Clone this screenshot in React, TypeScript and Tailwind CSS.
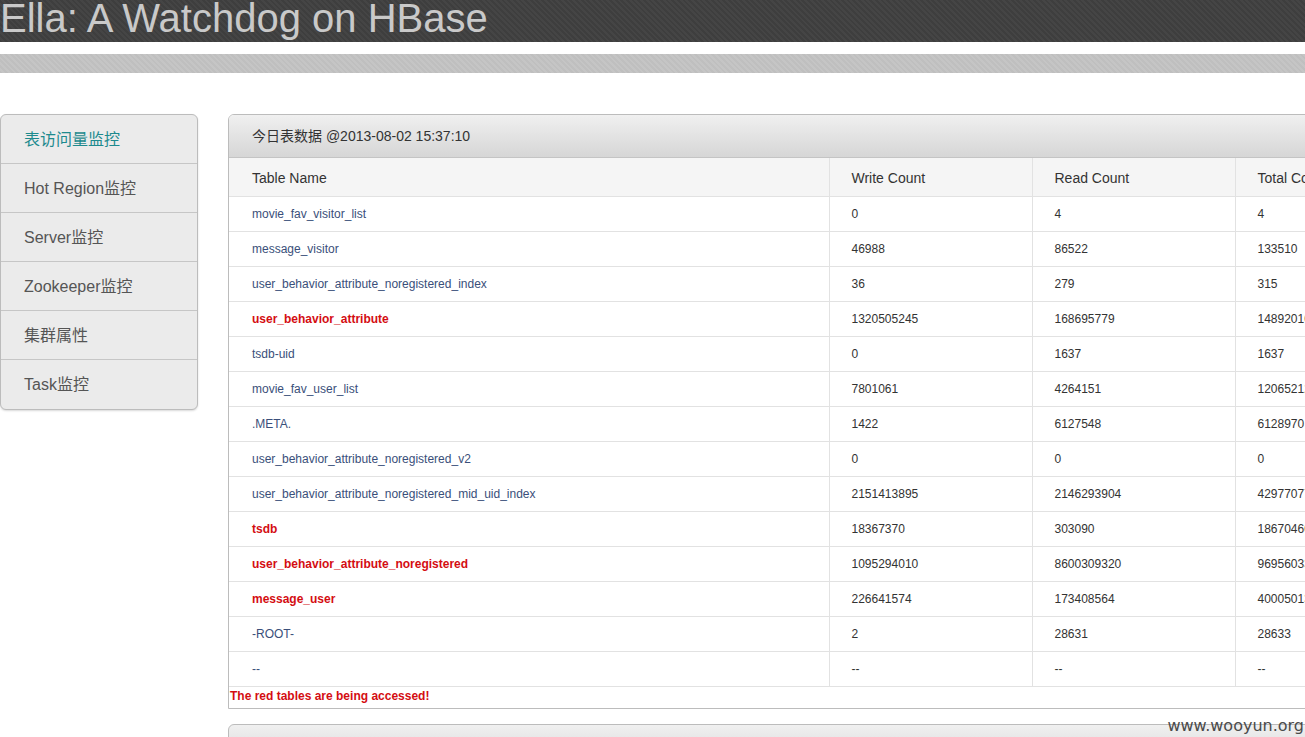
const rows: { name: string; w: string; r: string; t: string; hot?: boolean }[] = [
  { name: 'movie_fav_visitor_list', w: '0', r: '4', t: '4' },
  { name: 'message_visitor', w: '46988', r: '86522', t: '133510' },
  { name: 'user_behavior_attribute_noregistered_index', w: '36', r: '279', t: '315' },
  { name: 'user_behavior_attribute', w: '1320505245', r: '168695779', t: '1489201024', hot: true },
  { name: 'tsdb-uid', w: '0', r: '1637', t: '1637' },
  { name: 'movie_fav_user_list', w: '7801061', r: '4264151', t: '12065212' },
  { name: '.META.', w: '1422', r: '6127548', t: '6128970' },
  { name: 'user_behavior_attribute_noregistered_v2', w: '0', r: '0', t: '0' },
  { name: 'user_behavior_attribute_noregistered_mid_uid_index', w: '2151413895', r: '2146293904', t: '4297707799' },
  { name: 'tsdb', w: '18367370', r: '303090', t: '18670460', hot: true },
  { name: 'user_behavior_attribute_noregistered', w: '1095294010', r: '8600309320', t: '9695603330', hot: true },
  { name: 'message_user', w: '226641574', r: '173408564', t: '400050138', hot: true },
  { name: '-ROOT-', w: '2', r: '28631', t: '28633' },
  { name: '--', w: '--', r: '--', t: '--' },
];

const menu = ['表访问量监控', 'Hot Region监控', 'Server监控', 'Zookeeper监控', '集群属性', 'Task监控'];

export default function App() {
  return (
    <div className="relative w-[1305px] h-[737px] overflow-hidden bg-white font-['Liberation_Sans','Noto_Sans_CJK_SC',sans-serif]">
      {/* title bar */}
      <div className="h-[42px] bg-[repeating-linear-gradient(45deg,#3e3e3e_0px,#3e3e3e_2px,#454545_2px,#454545_4px)]">
        <h1 className="text-[40px] leading-[36px] text-[#c9c9c9] whitespace-nowrap">Ella: A Watchdog on HBase</h1>
      </div>
      <div className="h-[12px]" />
      <div className="h-[19px] bg-[repeating-linear-gradient(45deg,#bfbfbf_0px,#bfbfbf_2px,#c5c5c5_2px,#c5c5c5_4px)]" />

      <div className="flex items-start pt-[41px]">
        {/* side nav */}
        <ul className="w-[198px] shrink-0 border border-[#bcbcbc] rounded-[6px] bg-[#ebebeb] shadow-[0_1px_2px_rgba(0,0,0,0.15)] overflow-hidden">
          {menu.map((m, i) => (
            <li
              key={m}
              className={`h-[49px] flex items-center pl-[23px] pt-[1px] text-[16px] ${i < menu.length - 1 ? 'border-b border-[#c6c6c6]' : ''} ${i === 0 ? 'text-[#1d8a8e]' : 'text-[#555]'}`}
            >
              {m}
            </li>
          ))}
        </ul>

        <div className="ml-[30px] shrink-0 w-[1220px]">
          {/* panel */}
          <div className="border border-[#bcbcbc] rounded-tl-[6px] overflow-hidden">
            <div className="h-[43px] flex items-center pl-[23px] bg-gradient-to-b from-[#f0f0f0] to-[#d6d6d6] border-b border-[#c4c4c4] text-[14px] text-[#333]">
              今日表数据 @2013-08-02 15:37:10
            </div>
            <table className="w-full border-collapse table-fixed">
              <colgroup>
                <col className="w-[600px]" />
                <col className="w-[203px]" />
                <col className="w-[203px]" />
                <col />
              </colgroup>
              <thead>
                <tr className="h-[38px] bg-[#f5f5f5] text-[14px] text-[#333] text-left">
                  <th className="font-normal pl-[23px] pt-[3px] border-b border-[#e2e2e2]">Table Name</th>
                  <th className="font-normal pl-[22px] pt-[3px] border-b border-l border-[#e2e2e2]">Write Count</th>
                  <th className="font-normal pl-[22px] pt-[3px] border-b border-l border-[#e2e2e2]">Read Count</th>
                  <th className="font-normal pl-[22px] pt-[3px] border-b border-l border-[#e2e2e2] whitespace-nowrap">Total Count</th>
                </tr>
              </thead>
              <tbody className="text-[12px]">
                {rows.map((r, i) => (
                  <tr key={i} className="h-[35px]">
                    <td className={`pl-[23px] border-b border-[#e2e2e2] ${r.hot ? 'text-[#d40d12] font-bold' : 'text-[#3a4f7a]'}`}>{r.name}</td>
                    <td className="pl-[22px] border-b border-l border-[#e2e2e2] text-[#333]">{r.w}</td>
                    <td className="pl-[22px] border-b border-l border-[#e2e2e2] text-[#333]">{r.r}</td>
                    <td className="pl-[22px] border-b border-l border-[#e2e2e2] text-[#333] whitespace-nowrap">{r.t}</td>
                  </tr>
                ))}
              </tbody>
            </table>
            <p className="h-[21px] pl-[1px] leading-[19px] text-[12px] font-bold text-[#d40d12]">The red tables are being accessed!</p>
          </div>

          {/* next panel */}
          <div className="mt-[15px] border border-[#bcbcbc] rounded-tl-[6px] h-[44px] bg-gradient-to-b from-[#f0f0f0] to-[#d6d6d6]" />
        </div>
      </div>

      <span className="absolute right-[1px] bottom-[-1px] text-[16px] text-[#4a4a4a] font-['DejaVu_Sans',sans-serif]">www.wooyun.org</span>
    </div>
  );
}
